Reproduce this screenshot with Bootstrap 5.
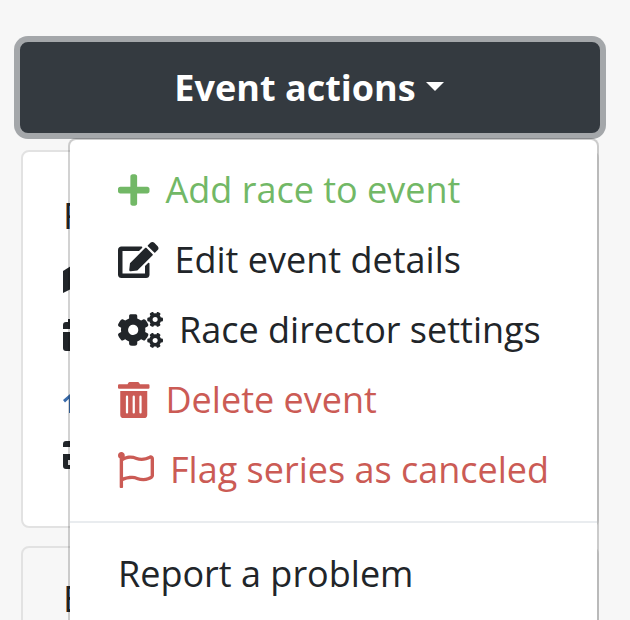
<!DOCTYPE html>
<html lang="en">
<head>
<meta charset="utf-8">
<title>Event actions</title>
<link rel="stylesheet" href="https://cdn.jsdelivr.net/npm/bootstrap@5.3.0/dist/css/bootstrap.min.css">
<style>
html, body { overflow: hidden; height: 620px; }
body { background: #f7f7f7; font-family: "Open Sans", sans-serif; color: #212529; }
.page-wrap { padding: 42px 30px 0 20px; }
.menu-anchor { position: relative; }
.action-btn { font-size: 36px; font-weight: 700; line-height: 54px; padding: 16.5px 26px 16.5px 24px; border-width: 2px; border-radius: 8px; background: #343a40; border-color: #343a40; box-shadow: 0 0 0 6px rgba(82,88,93,.5); width: 580px; }
.action-btn.dropdown-toggle::after { border-top-width: .26em; border-left-width: .26em; border-right-width: .26em; margin-left: 10px; }
.action-menu { position: absolute; left: 48px; top: 96px; width: 531px; z-index: 5; border-width: 2px; border-radius: 8px; padding: 15px 0 16px; font-size: 36px; }
.action-menu .dropdown-item { padding: 8px 48px; line-height: 54px; display: flex; align-items: center; }
.action-menu .dropdown-divider { margin: 16px 0; border-top: 2px solid #e9ecef; opacity: 1; }
.action-menu svg { height: 36px; fill: currentColor; margin-right: 16px; flex: none; }
.tone-green { color: #72b866; }
.tone-red { color: #cb5b55; }
.info-card { width: 578px; margin-left: 1px; border: 2px solid #e2e2e2; border-radius: 8px; font-size: 36px; padding: 38px 40px 0; }
.first-card { margin-top: 17px; height: 378px; }
.second-card { margin-top: 18px; height: 200px; background: #f7f7f7; padding-top: 25px; }
.info-row { display: flex; align-items: center; height: 52px; gap: 16px; white-space: nowrap; }
.info-row svg { width: 36px; fill: #212529; flex: none; }
.row-gap-a { margin-top: 11px; }
.row-gap-b { margin-top: 4px; }
.row-gap-c { margin-top: 16px; }
.glyph-map { height: 27px; }
.glyph-date { height: 32px; }
.glyph-web { height: 19px; }
.glyph-web path { fill: #3a6cac; }
.glyph-car { height: 28px; }
</style>
</head>
<body>
<div class="page-wrap">
  <div class="menu-anchor">
    <button type="button" class="btn btn-dark dropdown-toggle action-btn">Event actions</button>
    <div class="dropdown-menu show action-menu">
      <a class="dropdown-item tone-green" href="#"><svg viewBox="0 0 448 512"><path d="M416 208H272V64c0-17.67-14.33-32-32-32h-32c-17.67 0-32 14.33-32 32v144H32c-17.67 0-32 14.33-32 32v32c0 17.67 14.33 32 32 32h144v144c0 17.67 14.33 32 32 32h32c17.67 0 32-14.33 32-32V304h144c17.67 0 32-14.33 32-32v-32c0-17.67-14.33-32-32-32z"/></svg>Add race to event</a>
      <a class="dropdown-item" href="#"><svg viewBox="0 0 576 512"><path d="M402.6 83.2l90.2 90.2c3.8 3.8 3.8 10 0 13.8L274.4 405.6l-92.8 10.3c-12.4 1.4-22.9-9.1-21.5-21.5l10.3-92.8L388.8 83.2c3.8-3.8 10-3.8 13.8 0zm162-22.9l-48.8-48.8c-15.2-15.2-39.9-15.2-55.2 0l-35.4 35.4c-3.8 3.8-3.8 10 0 13.8l90.2 90.2c3.8 3.8 10 3.8 13.8 0l35.4-35.4c15.2-15.3 15.2-40 0-55.2zM384 346.2V448H64V128h229.8c3.2 0 6.2-1.3 8.5-3.5l40-40c7.6-7.6 2.2-20.5-8.5-20.5H48C21.5 64 0 85.5 0 112v352c0 26.5 21.5 48 48 48h352c26.5 0 48-21.5 48-48V306.2c0-10.7-12.9-16-20.5-8.5l-40 40c-2.2 2.3-3.5 5.3-3.5 8.5z"/></svg>Edit event details</a>
      <a class="dropdown-item" href="#"><svg viewBox="0 0 640 512"><path d="M512.1 191l-8.2 14.3c-3 5.3-9.4 7.5-15.1 5.4-11.8-4.4-22.6-10.7-32.1-18.6-4.6-3.8-5.8-10.5-2.8-15.7l8.2-14.3c-6.9-8-12.3-17.3-15.9-27.4h-16.5c-6 0-11.2-4.3-12.2-10.3-2-12-2.1-24.6 0-37.1 1-6 6.2-10.4 12.2-10.4h16.5c3.6-10.1 9-19.4 15.9-27.4l-8.2-14.3c-3-5.2-1.9-11.9 2.8-15.7 9.5-7.9 20.4-14.2 32.1-18.6 5.7-2.1 12.1.1 15.1 5.4l8.2 14.3c10.5-1.9 21.2-1.9 31.7 0L552 6.3c3-5.3 9.4-7.5 15.1-5.4 11.8 4.4 22.6 10.7 32.1 18.6 4.6 3.8 5.8 10.5 2.8 15.7l-8.2 14.3c6.9 8 12.3 17.3 15.9 27.4h16.5c6 0 11.2 4.3 12.2 10.3 2 12 2.1 24.6 0 37.1-1 6-6.2 10.4-12.2 10.4h-16.5c-3.6 10.1-9 19.4-15.9 27.4l8.2 14.3c3 5.2 1.9 11.9-2.8 15.7-9.5 7.9-20.4 14.2-32.1 18.6-5.7 2.1-12.1-.1-15.1-5.4l-8.2-14.3c-10.4 1.9-21.2 1.9-31.7 0zm-10.5-58.8c38.5 29.6 82.4-14.3 52.8-52.8-38.5-29.7-82.4 14.3-52.8 52.8zM386.3 286.1l33.7 16.8c10.1 5.8 14.5 18.1 10.5 29.1-8.9 24.2-26.4 46.4-42.6 65.8-7.4 8.9-20.2 11.1-30.3 5.3l-29.1-16.8c-16 13.7-34.6 24.6-54.9 31.7v33.6c0 11.6-8.3 21.6-19.7 23.6-24.6 4.2-50.4 4.4-75.9 0-11.5-2-20-11.9-20-23.6V418c-20.3-7.2-38.9-18-54.9-31.7L74 403c-10 5.8-22.9 3.6-30.3-5.3-16.2-19.4-33.3-41.6-42.2-65.7-4-10.9.4-23.2 10.5-29.1l33.3-16.8c-3.9-20.9-3.9-42.4 0-63.4L12 205.8c-10.1-5.8-14.6-18.1-10.5-29 8.9-24.2 26-46.4 42.2-65.8 7.4-8.9 20.2-11.1 30.3-5.3l29.1 16.8c16-13.7 34.6-24.6 54.9-31.7V57.1c0-11.5 8.2-21.5 19.6-23.5 24.6-4.2 50.5-4.4 76-.1 11.5 2 20 11.9 20 23.6v33.6c20.3 7.2 38.9 18 54.9 31.7l29.1-16.8c10-5.8 22.9-3.6 30.3 5.3 16.2 19.4 33.2 41.6 42.1 65.8 4 10.9.1 23.2-10 29.1l-33.7 16.8c3.9 21 3.9 42.5 0 63.5zm-117.6 21.1c59.2-77-28.7-164.9-105.7-105.7-59.2 77 28.7 164.9 105.7 105.7zm243.4 182.7l-8.2 14.3c-3 5.3-9.4 7.5-15.1 5.4-11.8-4.4-22.6-10.7-32.1-18.6-4.6-3.8-5.8-10.5-2.8-15.7l8.2-14.3c-6.9-8-12.3-17.3-15.9-27.4h-16.5c-6 0-11.2-4.3-12.2-10.3-2-12-2.1-24.6 0-37.1 1-6 6.2-10.4 12.2-10.4h16.5c3.6-10.1 9-19.4 15.9-27.4l-8.2-14.3c-3-5.2-1.9-11.9 2.8-15.7 9.5-7.9 20.4-14.2 32.1-18.6 5.7-2.1 12.1.1 15.1 5.4l8.2 14.3c10.5-1.9 21.2-1.9 31.7 0l8.2-14.3c3-5.3 9.4-7.5 15.1-5.4 11.8 4.4 22.6 10.7 32.1 18.6 4.6 3.8 5.8 10.5 2.8 15.7l-8.2 14.3c6.9 8 12.3 17.3 15.9 27.4h16.5c6 0 11.2 4.3 12.2 10.3 2 12 2.1 24.6 0 37.1-1 6-6.2 10.4-12.2 10.4h-16.5c-3.6 10.1-9 19.4-15.9 27.4l8.2 14.3c3 5.2 1.9 11.9-2.8 15.7-9.5 7.9-20.4 14.2-32.1 18.6-5.7 2.1-12.1-.1-15.1-5.4l-8.2-14.3c-10.4 1.9-21.2 1.9-31.7 0zM501.6 431c38.5 29.6 82.4-14.3 52.8-52.8-38.5-29.6-82.4 14.3-52.8 52.8z"/></svg>Race director settings</a>
      <a class="dropdown-item tone-red" href="#"><svg viewBox="0 0 448 512"><path d="M32 464a48 48 0 0 0 48 48h288a48 48 0 0 0 48-48V128H32zm272-256a16 16 0 0 1 32 0v224a16 16 0 0 1-32 0zm-96 0a16 16 0 0 1 32 0v224a16 16 0 0 1-32 0zm-96 0a16 16 0 0 1 32 0v224a16 16 0 0 1-32 0zM432 32H312l-9.4-18.7A24 24 0 0 0 281.1 0H166.8a23.72 23.72 0 0 0-21.4 13.3L136 32H16A16 16 0 0 0 0 48v32a16 16 0 0 0 16 16h416a16 16 0 0 0 16-16V48a16 16 0 0 0-16-16z"/></svg>Delete event</a>
      <a class="dropdown-item tone-red" href="#"><svg viewBox="0 0 512 512"><path d="M336.174 80c-49.132 0-93.305-32-161.913-32-31.301 0-58.303 6.482-80.721 15.168a48.04 48.04 0 0 0 2.142-20.727C93.067 19.575 74.167 1.594 51.201.104 23.242-1.71 0 20.431 0 48c0 17.764 9.657 33.262 24 41.562V496c0 8.837 7.163 16 16 16h16c8.837 0 16-7.163 16-16v-83.443C109.869 395.28 143.259 384 199.826 384c49.132 0 93.305 32 161.913 32 58.479 0 101.972-22.617 128.548-39.981C503.846 367.161 512 352.051 512 335.855V95.937c0-34.459-35.264-57.768-66.904-44.117C409.193 67.309 371.641 80 336.174 80zM464 336c-21.783 15.412-60.824 32-102.261 32-59.945 0-102.002-32-161.913-32-43.361 0-96.379 9.403-127.826 24V128c21.784-15.412 60.824-32 102.261-32 59.945 0 102.002 32 161.913 32 43.271 0 96.32-17.366 127.826-32v240z"/></svg>Flag series as canceled</a>
      <hr class="dropdown-divider">
      <a class="dropdown-item" href="#">Report a problem</a>
    </div>
    <div class="card info-card first-card">
      <div class="info-row">R</div>
      <div class="info-row row-gap-a"><svg class="glyph-map" viewBox="0 0 36 27"><path d="M0 5 8 0v23l-8 4z"/></svg></div>
      <div class="info-row row-gap-b"><svg class="glyph-date" viewBox="0 0 36 32"><path d="M5 0h5v3h26v7H0V6a3 3 0 0 1 3-3h2zM0 13h36v19H3a3 3 0 0 1-3-3z"/></svg></div>
      <div class="info-row row-gap-c"><svg class="glyph-web" viewBox="0 0 36 19"><path d="M0 6 7 0l2 2-7 6.500zM6 3h3v16H6z"/></svg></div>
      <div class="info-row"><svg class="glyph-car" viewBox="0 0 36 28"><path d="M3 0h33v6H0V3a3 3 0 0 1 3-3zM0 13h36v15H3a3 3 0 0 1-3-3zm5 6v5h10v-5z"/></svg></div>
    </div>
    <div class="card info-card second-card">
      <div class="info-row">E</div>
    </div>
  </div>
</div>
<script src="https://cdn.jsdelivr.net/npm/bootstrap@5.3.0/dist/js/bootstrap.bundle.min.js"></script>
</body>
</html>
